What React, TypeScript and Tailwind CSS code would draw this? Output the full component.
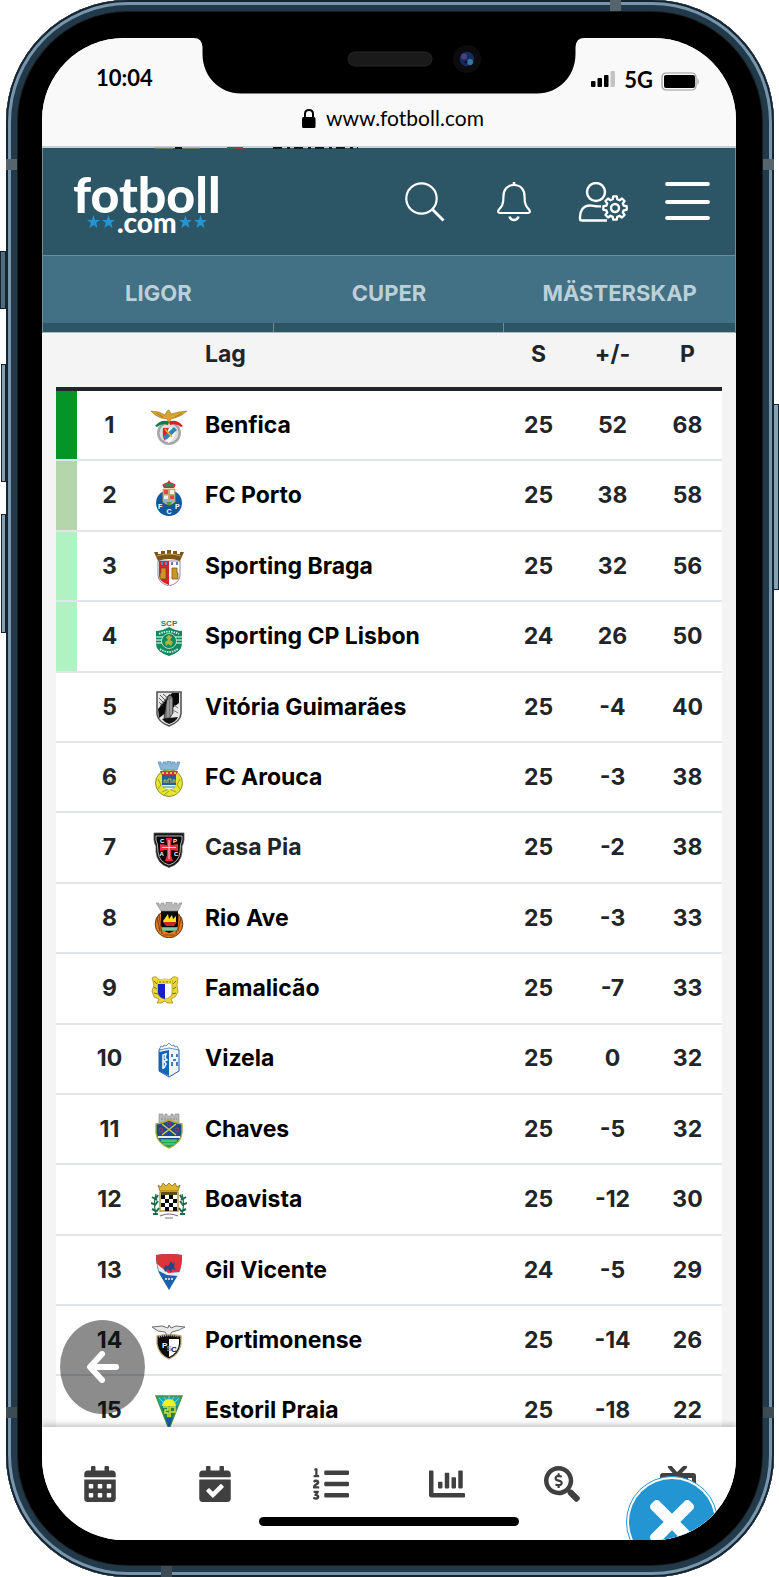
import React from "react";
import {
  FaCalendarAlt,
  FaCalendarCheck,
  FaChartBar,
  FaListOl,
  FaSearchDollar,
  FaTimes,
} from "react-icons/fa";

type Team = {
  name: string;
  played: number;
  diff: number;
  points: number;
  zone?: string;
  muted?: boolean;
  crest: React.ReactNode;
};

const teams: Team[] = [
  {
    name: "Benfica",
    played: 25,
    diff: 52,
    points: 68,
    zone: "bg-[#049428]",
    crest: (
      <>
        <circle cx="18" cy="24" r="12" fill="#a9abad" />
        <circle cx="18" cy="24" r="10" fill="#dcdcdc" stroke="#8a8a8a" strokeWidth=".6" />
        <path d="M12 19H18L14 32Q11 28 12 19Z" fill="#e0202c" />
        <path d="M18 19H25Q25 29 18 34L14 31Z" fill="#f7f7f7" />
        <path d="M12 28L23 18L26 21L15 31Z" fill="#2c86b8" />
        <path d="M14 20L21 28" stroke="#e8b52f" strokeWidth="1.6" />
        <path d="M4 17Q10 10 18 12.5L17 16Q10 14 6 18Z" fill="#15794b" />
        <path d="M32 17Q26 10 18 12.500L19 16Q26 14 30 18Z" fill="#d8202b" />
        <path d="M0 2L8 3L14 6L16 2L18 1L20 5L28 3L36 2L31 6L24 9L20 10L18 14L16 10L10 9L4 6Z" fill="#d6a42e" stroke="#8c6415" strokeWidth=".5" />
        <path d="M5 4L12 8M31 4L24 8" stroke="#8c6415" strokeWidth=".6" />
      </>
    ),
  },
  {
    name: "FC Porto",
    played: 25,
    diff: 38,
    points: 58,
    zone: "bg-[#b5d6ab]",
    crest: (
      <>
        <circle cx="18" cy="23" r="13" fill="#10599d" />
        <path d="M12 9H24V22Q18 27 12 22Z" fill="#8fb8d8" stroke="#d9a52f" strokeWidth=".8" />
        <path d="M13 10H17V14H13ZM19 15H23V19H19Z" fill="#d94b4b" />
        <path d="M19 10H23V14H19ZM13 15H17V19H13Z" fill="#eef4f8" />
        <path d="M18 9V22M12 15H24" stroke="#d9a52f" strokeWidth="1.2" />
        <path d="M13 8L12 4L15 5L18 0L21 5L24 4L23 8Z" fill="#c72f3b" />
        <path d="M12 5Q18 0 24 5L23 7H13Z" fill="#2e8b57" stroke="#c72f3b" strokeWidth="1.2" />
        <path d="M15 22L18 26L21 22" fill="#4a9c4a" />
        <g fill="#fff" fontFamily="Liberation Sans, sans-serif" fontSize="7" fontWeight="700">
          <text x="7" y="29">F</text>
          <text x="15.500" y="34">C</text>
          <text x="24" y="29">P</text>
        </g>
      </>
    ),
  },
  {
    name: "Sporting Braga",
    played: 25,
    diff: 32,
    points: 56,
    zone: "bg-[#b0f2c1]",
    crest: (
      <>
        <path d="M7 11H29V25Q29 33 18 36Q7 33 7 25Z" fill="#fff" stroke="#7b6a85" strokeWidth=".8" />
        <path d="M8 11H18V35Q8 32 8 25Z" fill="#d4232e" />
        <path d="M3 2H7V4H10V1H14V4H16V0H20V4H22V1H26V4H29V2H33L29 11Q18 7 7 11Z" fill="#7c5521" />
        <path d="M6 6Q18 2 30 6" stroke="#c99b45" strokeWidth="1.2" fill="none" />
        <path d="M10 18H15V29H9V23H10ZM21 18H26V23H27V29H21Z" fill="#c9962c" stroke="#6e4b12" strokeWidth=".7" />
        <path d="M10 12H12V15H10ZM14 12H16V15H14ZM20 12H22V15H20ZM25 12H27V15H25Z" fill="#5e86b4" />
      </>
    ),
  },
  {
    name: "Sporting CP Lisbon",
    played: 24,
    diff: 26,
    points: 50,
    zone: "bg-[#b0f2c1]",
    crest: (
      <>
        <text x="18" y="6" textAnchor="middle" fill="#0c8a5c" fontFamily="Liberation Sans, sans-serif" fontSize="8" fontWeight="700">SCP</text>
        <path d="M5 11Q11 11 18 7Q25 11 31 11V24Q31 32 18 36Q5 32 5 24Z" fill="#0c8a5c" />
        <path d="M5 17H31M5 20H31M5 23H31" stroke="#fff" strokeWidth="1.1" />
        <circle cx="18" cy="21" r="7.500" fill="#0c8a5c" stroke="#e9f6ef" strokeWidth=".7" />
        <path d="M15 17L18 15L21 17L19 20L22 22L20 26L17 24L15 26L14 22L17 20Z" fill="#a9b73c" />
        <path d="M8 14Q18 9 28 14M9 29Q18 35 27 29" stroke="#d6efe3" strokeWidth="1.800" strokeDasharray="1.500 1" fill="none" />
      </>
    ),
  },
  {
    name: "Vitória Guimarães",
    played: 25,
    diff: -4,
    points: 40,
    crest: (
      <>
        <path d="M6 1H30V23Q29 31 18 35Q7 31 6 23Z" fill="#e8e8e8" stroke="#555" strokeWidth="1.600" />
        <path d="M28 2V12L8 27L7 18L21 2Z" fill="#080808" />
        <path d="M9 4L17 12M12 3L19 9M8 7L15 14M8 11L12 15M19 3L9 15" stroke="#333" strokeWidth=".8" />
        <path d="M15 13L17 5L20 4L22 7V22L18 28H13Z" fill="#777" stroke="#111" strokeWidth=".7" />
        <path d="M17 9V26M20 8V24" stroke="#ddd" strokeWidth=".7" />
        <path d="M11 28L18 27L27 26Q25 31 18 33Q13 31 11 28Z" fill="#111" />
        <path d="M23 14L27 17M22 19L27 22" stroke="#777" />
      </>
    ),
  },
  {
    name: "FC Arouca",
    played: 25,
    diff: -3,
    points: 38,
    crest: (
      <>
        <circle cx="18" cy="22" r="13.500" fill="#e9e52f" stroke="#6a7a2c" strokeWidth=".8" />
        <path d="M7 18L10 24L7 28M29 18L26 24L29 28M11 31L18 28L25 31M13 34L18 30" stroke="#9aa32a" fill="none" />
        <path d="M11 14H25V24Q24 28 18 29Q12 28 11 24Z" fill="#27618f" />
        <path d="M11 24H25Q24 28 18 29Q12 28 11 24Z" fill="#e4eff4" />
        <path d="M12 26H24" stroke="#3c8ab8" />
        <path d="M13 22V19H15V22M17 22V18H20V22M22 22V19H24V22" stroke="#d3c552" strokeWidth=".9" fill="none" />
        <path d="M7 1H10V3H12V1H15V3H16V0H20V3H21V1H24V3H26V1H29L26 9H10Z" fill="#8db5d8" stroke="#5f8db4" strokeWidth=".7" />
        <path d="M9 10H27L25 14H11Z" fill="#c53640" />
        <path d="M11 12H25" stroke="#e9c04a" strokeWidth="2" strokeDasharray="2 2" />
      </>
    ),
  },
  {
    name: "Casa Pia",
    played: 25,
    diff: -2,
    points: 38,
    muted: true,
    crest: (
      <>
        <path d="M3 1H33V8Q32 13 31 14V20Q30 32 18 35.500Q6 32 5 20V14Q4 13 3 8Z" fill="#161616" stroke="#555" strokeWidth=".8" />
        <path d="M5 4H31V8Q29 12 29 20Q28 30 18 33Q8 30 7 20Q7 12 5 8Z" fill="#050505" stroke="#ddd" strokeWidth=".8" />
        <path d="M15 6H21L20 12V13L27 12V19L20 18V23L22 29H14L16 23V18L9 19V12L16 13V12Z" fill="#f02b3f" />
        <path d="M18 8V27M11 15.500H25" stroke="#ffd4d8" strokeWidth="1" />
        <g fill="#fff" fontFamily="Liberation Sans, sans-serif" fontSize="6" fontWeight="700">
          <text x="9" y="11">C</text>
          <text x="22" y="11">P</text>
          <text x="8.500" y="24">A</text>
          <text x="23" y="24">C</text>
        </g>
      </>
    ),
  },
  {
    name: "Rio Ave",
    played: 25,
    diff: -3,
    points: 33,
    crest: (
      <>
        <circle cx="18" cy="22" r="13.800" fill="#e27b22" stroke="#5c3a17" strokeWidth="1" />
        <path d="M6 15L9 29M8 12L11 32M30 15L27 29M28 12L25 32M12 33L24 33" stroke="#8b4312" strokeWidth="1.200" />
        <path d="M10 9H27V23Q26 29 18 31Q11 29 10 23Z" fill="#080808" />
        <path d="M12 19L17 12L18 17L21 13L22 17L25 14V21H13Z" fill="#ffe11c" />
        <path d="M12 20L15 24H23L26 20Z" fill="#c82824" />
        <path d="M10 25H27L25 29H12Z" fill="#5aa57d" />
        <path d="M11 27H26" stroke="#d5eee0" strokeWidth=".8" />
        <path d="M5 1H8V3H10V1H13V3H15V0H21V3H23V1H26V3H28V1H31L27 9H10Z" fill="#b7b7b7" stroke="#8b8b8b" strokeWidth=".6" />
      </>
    ),
  },
  {
    name: "Famalicão",
    played: 25,
    diff: -7,
    points: 33,
    crest: (
      <>
        <path d="M1 6Q5 3 7 7Q14 10 20 7Q22 3 27 6L26 13L27 20L24 25L20 27L22 31H16L14 29L10 31L6 31L8 27L3 25L1 19L3 13Z" fill="#ecd735" stroke="#a28f2a" strokeWidth=".8" />
        <path d="M3 9L6 12M3 15L6 17M3 21L7 22M25 9L22 12M25 15L22 17M25 21L21 22" stroke="#756b20" strokeWidth="1" />
        <path d="M7 8Q14 6 21 8V21Q20 26 14 27Q8 26 7 21Z" fill="#fff" stroke="#8b8128" strokeWidth=".6" />
        <path d="M7 12H14V27Q8 26 7 21Z" fill="#1620c8" />
        <path d="M7 8Q14 6 21 8V12H7Z" fill="#eedb35" />
        <path d="M8 10H20" stroke="#6d6523" strokeDasharray="2 1.500" />
      </>
    ),
  },
  {
    name: "Vizela",
    played: 25,
    diff: 0,
    points: 32,
    crest: (
      <>
        <path d="M8 7L18 2L28 7V28L18 34L8 28Z" fill="#f1f5fa" stroke="#1b5eaa" strokeWidth="1" />
        <path d="M8 9L18 7V33L8 28Z" fill="#1765b5" />
        <path d="M8 7L10 3L12 4L13 2L15 3L18 0L21 3L23 2L24 4L26 3L28 7L18 5Z" fill="#fff" stroke="#3d76b4" strokeWidth=".8" />
        <path d="M12 26V12L15 11L14 15L16 17L13 18L15 21L13 25" stroke="#f0f6fc" strokeWidth="1.600" fill="none" />
        <path d="M20 11H22V14H20ZM25 11H27V14H25ZM20 19H22V23H20ZM25 19H27V23H25ZM22 16H25V18H22Z" fill="#3e7fc1" />
      </>
    ),
  },
  {
    name: "Chaves",
    played: 25,
    diff: -5,
    points: 32,
    crest: (
      <>
        <path d="M8 1H12V3H14V1H16V3H20V1H22V3H24V1H28V11H8Z" fill="#b8b8b8" stroke="#888" strokeWidth=".6" />
        <path d="M10 6H26" stroke="#888" strokeDasharray="2 1" />
        <path d="M5 11Q12 10 18 7Q24 10 31 11V20Q30 30 18 35Q6 30 5 20Z" fill="#174d86" stroke="#a8b134" strokeWidth="1.400" />
        <path d="M9 26H27Q24 32 18 34Q12 32 9 26Z" fill="#1fa85a" />
        <path d="M7 24H29" stroke="#e6eef2" strokeWidth="2" />
        <path d="M10 28H26M12 31H24" stroke="#7ee0a0" strokeWidth=".9" />
        <path d="M11 11L25 22M25 11L11 22" stroke="#d7c94c" strokeWidth="1.500" />
        <circle cx="10" cy="17" r="2" fill="none" stroke="#a73468" />
        <circle cx="26" cy="17" r="2" fill="none" stroke="#a73468" />
        <circle cx="18" cy="11" r="1.800" fill="none" stroke="#a73468" />
      </>
    ),
  },
  {
    name: "Boavista",
    played: 25,
    diff: -12,
    points: 30,
    crest: (
      <>
        <path d="M7 2L10 4L12 0L15 3L18 0L21 3L24 0L26 4L29 2L27 8H9Z" fill="#e0b52b" stroke="#7c5f14" strokeWidth=".7" />
        <path d="M9 9H27V28H9Z" fill="#fff" stroke="#b1962b" strokeWidth="1.400" />
        <path d="M10 9H26V12H10Z" fill="#5d4f17" />
        <path d="M10 14H26M14 18H26M10 22H26M14 26H26" stroke="#080808" strokeWidth="4" strokeDasharray="4 4" />
        <path d="M5 11Q2 20 5 32M31 11Q34 20 31 32" stroke="#26704d" strokeWidth="1.200" fill="none" />
        <path d="M1 14L6 17M7 12L4 17M0 20L5 22M7 18L4 22M1 26L5 28M8 25L5 29M2 31L7 31M35 14L30 17M29 12L32 17M36 20L31 22M29 18L32 22M35 26L31 28M28 25L31 29M34 31L29 31" stroke="#1d6b48" strokeWidth="2" />
        <path d="M9 33Q18 29 27 33M14 35H22" stroke="#777" strokeWidth="1.200" fill="none" />
      </>
    ),
  },
  {
    name: "Gil Vicente",
    played: 24,
    diff: -5,
    points: 29,
    crest: (
      <>
        <path d="M5 1Q18 -1 31 1Q31 13 27 21L18 36L9 21Q5 13 5 1Z" fill="#1e61aa" />
        <path d="M5 1Q18 -1 31 1Q31 10 29 17L18 20L7 14Q5 8 5 1Z" fill="#dd343a" />
        <path d="M6 10L17 19L29 18L27 22L16 21L8 17Z" fill="#e8eef4" />
        <path d="M13 15L14 11L17 12L20 7L22 10L24 8L23 13L25 16L21 15L20 19L17 15L14 18Z" fill="#244983" />
        <path d="M14 25H22" stroke="#bed3e9" strokeWidth="2" strokeDasharray="2 1" />
      </>
    ),
  },
  {
    name: "Portimonense",
    played: 25,
    diff: -14,
    points: 26,
    crest: (
      <>
        <path d="M6 12Q18 9 30 12V20Q28 31 18 35Q8 31 6 20Z" fill="#0b0b0b" stroke="#bda775" strokeWidth="1.300" />
        <path d="M18 15H28V20Q27 29 18 33Z" fill="#fff" />
        <path d="M8 13Q18 10 28 13" stroke="#c9a94e" strokeWidth="1.700" strokeDasharray="1 1" fill="none" />
        <g fontFamily="Liberation Sans, sans-serif" fontSize="8" fontWeight="700">
          <text x="11" y="24" fill="#fff">P</text>
          <text x="15.500" y="27" fill="#999">S</text>
          <text x="20" y="28" fill="#111">C</text>
        </g>
        <path d="M1 3L11 2L17 4L18 1L20 4L25 2L34 3L28 6L21 8L19 11H16L14 8L7 7Z" fill="#e9e9e9" stroke="#6f6f6f" strokeWidth="1" />
      </>
    ),
  },
  {
    name: "Estoril Praia",
    played: 25,
    diff: -18,
    points: 22,
    crest: (
      <>
        <path d="M5 1H31L18 34Z" fill="#16a8b9" stroke="#4b9140" strokeWidth="1.400" />
        <path d="M11 11A7 7 0 0 1 25 11Z" fill="#f8ef24" />
        <path d="M8 3L12 7M13 2L15 5M18 1V5M23 2L21 5M28 3L24 7" stroke="#8fd1a0" />
        <path d="M10 11H26L22 23H14Z" fill="#238346" />
        <path d="M12 12H17V15H14V18H17V22M19 22V12H24V17H20" stroke="#d6e537" strokeWidth="1.500" fill="none" />
        <path d="M14 23H22L18 33Z" fill="#155dab" />
      </>
    ),
  },
];

// Kugghjulets kontur
function gearPath(cx: number, cy: number, inner: number, outer: number, teeth: number) {
  const step = (Math.PI * 2) / teeth;
  let d = "";
  for (let i = 0; i < teeth; i++) {
    const a = i * step - Math.PI / 2;
    [
      [inner, -0.33],
      [outer, -0.2],
      [outer, 0.2],
      [inner, 0.33],
    ].forEach(([r, o], j) => {
      const x = cx + r * Math.cos(a + o * step);
      const y = cy + r * Math.sin(a + o * step);
      d += `${i + j === 0 ? "M" : "L"}${x.toFixed(2)} ${y.toFixed(2)}`;
    });
  }
  return d + "Z";
}

const SearchIcon = () => (
  <svg width="40" height="40" viewBox="0 0 40 40" fill="none" stroke="#fff" strokeWidth="2.200">
    <circle cx="16.500" cy="16.500" r="15.200" />
    <path d="M27 27L38.500 38.500" strokeWidth="2.800" />
  </svg>
);

const BellIcon = () => (
  <svg width="34" height="40" viewBox="0 0 34 40" fill="none" stroke="#fff" strokeWidth="2.200" strokeLinejoin="round">
    <path d="M17 0V3" strokeWidth="2.600" />
    <path d="M17 3C10 3 6.500 8 6.500 14C6.500 23 4.500 25 2 27.500C0.500 29.500 1 31 3 31H31C33 31 33.500 29.500 32 27.500C29.500 25 27.500 23 27.500 14C27.500 8 24 3 17 3Z" />
    <path d="M12.500 34.500Q13.500 38 17 38Q20.500 38 21.500 34.500" strokeWidth="2.600" />
  </svg>
);

const AccountIcon = () => (
  <svg width="50" height="40" viewBox="0 0 50 40" fill="none" stroke="#fff" strokeWidth="2.400" strokeLinejoin="round">
    <circle cx="18" cy="10" r="9" />
    <path d="M23 24.200C18 25 15 23.500 12 23.500C5 23.500 2 29 2 35V36.500Q2 38.500 4 38.500H29" />
    <path d={gearPath(37, 26, 9, 11.8, 8)} strokeWidth="2.300" />
    <circle cx="37" cy="26" r="4" strokeWidth="2.400" />
  </svg>
);

const MenuIcon = () => (
  <svg width="46" height="40" viewBox="0 0 46 40" stroke="#fff" strokeWidth="3.800" strokeLinecap="round">
    <path d="M2 2H43M2 20H43M2 36H43" />
  </svg>
);

const TvIcon = () => (
  <svg width="36" height="36" viewBox="0 0 36 36">
    <path d="M10 1L17 9L25 1" fill="none" stroke="#404040" strokeWidth="4" strokeLinecap="round" />
    <path d="M3 7H33Q36 7 36 10V30Q36 33 33 33H3Q0 33 0 30V10Q0 7 3 7ZM5 12V28H24V12ZM28 12V17H32V12Z" fill="#404040" fillRule="evenodd" />
  </svg>
);

const Star = () => (
  <svg width="13" height="13" viewBox="0 0 24 24" fill="#2395d3">
    <path d="M12 0L15 9H24L17 14.500L19.500 24L12 18.300L4.500 24L7 14.500L0 9H9Z" />
  </svg>
);

const navItems = [
  { label: "Kalender", icon: <FaCalendarAlt size={36} /> },
  { label: "Spelade", icon: <FaCalendarCheck size={36} /> },
  { label: "Tabell", icon: <FaListOl size={36} /> },
  { label: "Statistik", icon: <FaChartBar size={36} /> },
  { label: "Odds", icon: <FaSearchDollar size={36} /> },
  { label: "TV", icon: <TvIcon /> },
];

function Notch() {
  return (
    <svg className="absolute left-1/2 top-0 -translate-x-1/2" width="390" height="56" viewBox="0 0 390 56">
      <path d="M0 0Q8 0 8.500 9V16C8.500 38 25 55.500 47 55.500H343C365 55.500 381.500 38 381.500 16V9Q382 0 390 0Z" fill="#000" />
      <rect x="154" y="14" width="84" height="14" rx="7" fill="#1a1a1a" stroke="#262626" />
      <circle cx="273" cy="21" r="14" fill="#0c0c0e" />
      <circle cx="273" cy="21" r="7.300" fill="#172b58" />
      <circle cx="270" cy="18.500" r="3" fill="#4f3f80" />
      <circle cx="276" cy="24" r="3" fill="#3577a4" />
      <circle cx="272" cy="24" r="1.500" fill="#0a1230" />
    </svg>
  );
}

function StatusBar() {
  return (
    <div className="border-b-2 border-[#c9d1d4] bg-[#f9f9f9] text-black">
      <div className="flex h-16 items-center justify-between pl-[54px] pr-9 pt-3.5 font-['Lato',sans-serif] text-[22px] font-bold">
        <span>10:04</span>
        <div className="flex items-center gap-2 pt-1">
          <svg width="25" height="16" viewBox="0 0 25 16">
            <rect x="0" y="10" width="4.500" height="6" rx="1" />
            <rect x="6.500" y="7" width="4.500" height="9" rx="1" />
            <rect x="13" y="4" width="4.500" height="12" rx="1" />
            <rect x="19.500" y="0" width="4.500" height="16" rx="1" fill="#c4c4c4" />
          </svg>
          <span>5G</span>
          <svg className="mt-1" width="39" height="19" viewBox="0 0 39 19">
            <rect x="1" y="1" width="34" height="17" rx="4" fill="none" stroke="#999" strokeWidth="1.200" />
            <rect x="3" y="3" width="31" height="13" rx="2" />
            <path d="M36.500 6Q39 9.500 36.500 13Z" fill="#999" />
          </svg>
        </div>
      </div>
      <div className="flex h-11 items-center justify-center gap-2.5 pb-3 pl-2 font-['Lato',sans-serif] text-[21px]">
        <svg width="14" height="19" viewBox="0 0 14 19">
          <path d="M3 9V5Q3 1 7 1Q11 1 11 5V9" fill="none" stroke="#000" strokeWidth="2" />
          <rect x="0" y="8" width="13.500" height="11" rx="1.500" />
        </svg>
        <span>www.fotboll.com</span>
      </div>
    </div>
  );
}

function Header() {
  return (
    <header className="relative flex h-[107px] items-center justify-between border-x border-[#6f8d99] bg-[#2c5566] pl-[30px] pr-6">
      {/* Skymt av raden som rullat upp bakom menyn */}
      <svg className="absolute -top-px left-28" width="204" height="2" viewBox="0 0 204 2">
        <path d="M0 1H18M28 1H45" stroke="#a59c62" strokeWidth="1" />
        <path d="M20 1H27" stroke="#151515" strokeWidth="2" />
        <path d="M72 1H80" stroke="#2e6b51" strokeWidth="2" />
        <path d="M80 1H88" stroke="#9b3a42" strokeWidth="2" />
        <path d="M118 1H203" stroke="#101c22" strokeWidth="2" strokeDasharray="9 5 3 4" />
      </svg>
      <a href="#" className="flex flex-col items-center pt-1 font-['Lato',sans-serif] text-white">
        <span className="text-[50px] leading-9 font-black">fotboll</span>
        <span className="flex items-center gap-0.5">
          <Star />
          <Star />
          <span className="text-[28px] leading-5 font-black">.com</span>
          <Star />
          <Star />
        </span>
      </a>
      <div className="flex items-center">
        <button type="button" aria-label="Sök" className="mr-[52px]">
          <SearchIcon />
        </button>
        <button type="button" aria-label="Notiser" className="mr-[47px]">
          <BellIcon />
        </button>
        <button type="button" aria-label="Konto" className="mr-[37px]">
          <AccountIcon />
        </button>
        <button type="button" aria-label="Meny">
          <MenuIcon />
        </button>
      </div>
    </header>
  );
}

function Tabs() {
  return (
    <nav className="border-x border-t border-[#6f8d99] bg-[#427185]">
      <div className="grid grid-cols-3">
        {["LIGOR", "CUPER", "MÄSTERSKAP"].map((t) => (
          <button key={t} type="button" className="h-[67px] pt-2 text-[22px] font-bold text-[#bdd0d8]">
            {t}
          </button>
        ))}
      </div>
      <div className="grid h-2.5 grid-cols-3 divide-x divide-[#6f8d99] border-b border-[#a9b9c0] bg-[#2c5566]">
        <span />
        <span />
        <span />
      </div>
    </nav>
  );
}

function Standings() {
  return (
    <table className="h-[1114px] w-full table-fixed border-separate border-spacing-0 text-center text-[23px] font-bold text-[#212529]">
      <colgroup>
        <col className="w-[21px]" />
        <col className="w-[63px]" />
        <col className="w-[54px]" />
        <col />
        <col className="w-[67px]" />
        <col className="w-[81px]" />
        <col className="w-[69px]" />
      </colgroup>
      <thead>
        <tr className="h-[58px] align-top [&>th]:border-b-4 [&>th]:border-[#212529] [&>th]:pt-1 [&>th]:font-bold">
          <th />
          <th />
          <th />
          <th className="px-[11px] text-left">Lag</th>
          <th>S</th>
          <th>+/-</th>
          <th>P</th>
        </tr>
      </thead>
      <tbody>
        {teams.map((team, i) => (
          <tr key={team.name} className="bg-white [&>td]:border-b-2 [&>td]:border-[#e1e5e9]">
            <td className={team.zone} />
            <td className="pl-0.5">{i + 1}</td>
            <td className="pl-1">
              <svg className="mx-auto mt-1" width="36" height="36" viewBox="0 0 36 36">
                {team.crest}
              </svg>
            </td>
            <td className="px-[11px] text-left">
              <a href="#" className={team.muted ? "text-[#212529]" : "text-black"}>
                {team.name}
              </a>
            </td>
            <td>{team.played}</td>
            <td>{team.diff}</td>
            <td>{team.points}</td>
          </tr>
        ))}
      </tbody>
    </table>
  );
}

function BottomNav() {
  return (
    <nav className="relative grid h-[113px] shrink-0 grid-cols-6 bg-white text-[#404040] shadow-[0_-2px_6px_rgba(0,0,0,0.25)]">
      {navItems.map((item) => (
        <a key={item.label} href="#" aria-label={item.label} className="flex items-center justify-center">
          {item.icon}
        </a>
      ))}
      <div className="absolute bottom-3.5 left-1/2 h-[9px] w-[260px] -translate-x-1/2 rounded-full bg-black" />
      <button
        type="button"
        aria-label="Stäng"
        className="absolute top-[49px] right-[18px] flex size-[92px] items-center justify-center rounded-full border border-[#2395d3] bg-white p-0.5"
      >
        <span className="flex size-full items-center justify-center rounded-full bg-[#2395d3] text-white">
          <FaTimes size={64} />
        </span>
      </button>
    </nav>
  );
}

export default function App() {
  return (
    <div className="relative h-screen bg-white pr-[5px] pl-1.5 font-['Inter',sans-serif]">
      {/* Sidoknappar */}
      <div className="absolute left-0 top-[251px] h-[58px] w-1.5 border border-[#16232d] bg-[#4f6b80]" />
      <div className="absolute left-px top-[364px] h-[118px] w-[5px] border border-[#16232d] bg-[#83a2b3]" />
      <div className="absolute left-px top-[514px] h-[119px] w-[5px] border border-[#16232d] bg-[#83a2b3]" />
      <div className="absolute right-0 top-[404px] h-[186px] w-1.5 border border-[#16232d] bg-[#83a2b3]" />

      <div className="relative h-full overflow-hidden rounded-[122px] bg-black pt-[38px] pr-[38px] pb-[37px] pl-9 shadow-[inset_0_0_0_2px_#16242f,inset_0_0_0_5px_#7796ab,inset_0_0_0_11px_#22394a,inset_0_0_0_12px_#1c1c1c]">
        {/* Antennband */}
        <div className="absolute left-0 top-[159px] h-[11px] w-[11px] bg-[#56646e]" />
        <div className="absolute right-0 top-[159px] h-[11px] w-[11px] bg-[#56646e]" />
        <div className="absolute right-[153px] top-0 h-[11px] w-[11px] bg-[#56646e]" />
        <div className="absolute bottom-[159px] left-0 h-[11px] w-[11px] bg-[#3d4b55]" />
        <div className="absolute right-0 bottom-[159px] h-[11px] w-[11px] bg-[#3d4b55]" />
        <div className="absolute bottom-0 left-[155px] h-[11px] w-[11px] bg-[#3d4b55]" />

        <div className="relative flex h-full flex-col overflow-hidden rounded-[82px] bg-[#f4f4f4]">
          <StatusBar />
          <Header />
          <Tabs />
          <main className="min-h-0 flex-1 overflow-hidden px-3.5">
            <Standings />
          </main>
          <BottomNav />
          <button
            type="button"
            aria-label="Tillbaka"
            className="absolute bottom-[126px] left-[18px] flex h-[94px] w-[85px] items-center justify-center rounded-[50%] bg-black/45"
          >
            <svg width="34" height="32" viewBox="0 0 34 32" fill="none" stroke="#fff" strokeWidth="6" strokeLinecap="round" strokeLinejoin="round">
              <path d="M16 3L4 16L16 29M5 16H30" />
            </svg>
          </button>
          <Notch />
        </div>
      </div>
    </div>
  );
}
